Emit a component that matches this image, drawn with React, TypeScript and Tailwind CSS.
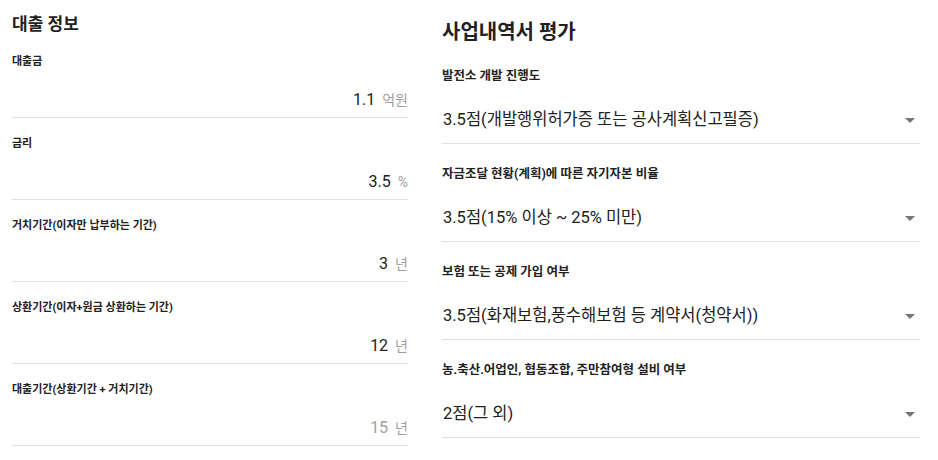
import React from "react";

const FONT = { fontFamily: "Roboto, 'Noto Sans CJK KR', sans-serif" };

type LeftField = { label: string; value: string; unit: string; disabled?: boolean };

const leftFields: LeftField[] = [
  { label: "대출금", value: "1.1", unit: "억원" },
  { label: "금리", value: "3.5", unit: "%" },
  { label: "거치기간(이자만 납부하는 기간)", value: "3", unit: "년" },
  { label: "상환기간(이자+원금 상환하는 기간)", value: "12", unit: "년" },
  { label: "대출기간(상환기간 + 거치기간)", value: "15", unit: "년", disabled: true },
];

const rightFields = [
  { label: "발전소 개발 진행도", value: "3.5점(개발행위허가증 또는 공사계획신고필증)" },
  { label: "자금조달 현황(계획)에 따른 자기자본 비율", value: "3.5점(15% 이상 ~ 25% 미만)" },
  { label: "보험 또는 공제 가입 여부", value: "3.5점(화재보험,풍수해보험 등 계약서(청약서))" },
  { label: "농.축산.어업인, 협동조합, 주만참여형 설비 여부", value: "2점(그 외)" },
];

function Arrow() {
  return (
    <svg width="24" height="24" viewBox="0 0 24 24" className="shrink-0">
      <path d="M7 10l5 5 5-5z" fill="#757575" />
    </svg>
  );
}

export default function App() {
  return (
    <div className="w-[938px] h-[460px] bg-white flex text-[#212121]" style={FONT}>
      <div className="ml-[12px] w-[396px] pt-[12px] flex flex-col">
        <div className="text-[17px] leading-[24px] font-bold">대출 정보</div>
        {leftFields.map((f) => (
          <div key={f.label} className="pt-[18px] pb-[5px] border-b border-[#e0e0e0] flex flex-col">
            <div className="text-[11px] leading-[16px] font-bold text-[#222]">{f.label}</div>
            <div className="mt-[18px] h-[24px] flex items-center justify-end gap-[7px]">
              <span className={`text-[16px] ${f.disabled ? "text-[#a0a0a0]" : "text-[#212121]"}`}>{f.value}</span>
              <span className="text-[14px] text-[#9e9e9e]">{f.unit}</span>
            </div>
          </div>
        ))}
      </div>
      <div className="ml-[34px] w-[478px] pt-[18px] flex flex-col">
        <div className="text-[20px] leading-[28px] font-bold">사업내역서 평가</div>
        {rightFields.map((f) => (
          <div key={f.label} className="pt-[22px] pb-[9px] border-b border-[#e0e0e0] flex flex-col">
            <div className="text-[12.5px] leading-[16px] font-bold text-[#222]">{f.label}</div>
            <div className="mt-[22px] h-[28px] flex items-center justify-between pl-[1px]">
              <span className="text-[16.5px]">{f.value}</span>
              <span className="mr-[-2px]"><Arrow /></span>
            </div>
          </div>
        ))}
      </div>
    </div>
  );
}
